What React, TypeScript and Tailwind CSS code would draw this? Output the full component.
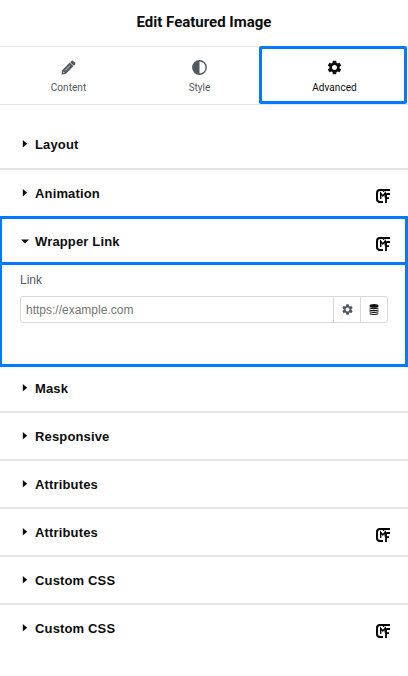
import React from "react";
import { MdSettings } from "react-icons/md";

function MfLogo() {
  return (
    <svg width="14" height="14" viewBox="0 0 14 14" fill="none" stroke="#000">
      <path d="M14 1H4Q1 1 1 4V10Q1 13 4 13H7" strokeWidth="2" />
      <path d="M4.7 10V4.2L6.8 6.9L9.2 4V8.5" strokeWidth="1.4" />
      <path d="M14 5H11Q10 5 10 6.5V14M10 9.2H13" strokeWidth="1.8" />
      <path d="M7.5 1.5V3" strokeWidth="1.4" />
    </svg>
  );
}

function PencilIcon() {
  return (
    <svg width="15" height="15" viewBox="0 0 15 15" fill="#515962">
      <path d="M10.4 .9Q11.4 0 12.4 .9L14 2.6Q14.9 3.6 14 4.6L12.8 5.8L9.2 2.2Z" />
      <path d="M8.8 2.6L12.4 6.2L4.6 13.9L.5 14.6L1.2 10.3Z" />
      <path d="M4.2 10.5L9 5.7" stroke="#fff" strokeWidth=".7" />
      <path d="M2 11.7L3.4 13.1" stroke="#fff" strokeWidth=".9" />
    </svg>
  );
}

function ContrastIcon() {
  return (
    <svg width="15" height="15" viewBox="0 0 15 15">
      <circle cx="7.5" cy="7.5" r="6.7" fill="none" stroke="#515962" strokeWidth="1.4" />
      <path d="M7.5 .8A6.7 6.7 0 0 0 7.5 14.2Z" fill="#515962" />
    </svg>
  );
}

function StackIcon() {
  return (
    <svg width="10" height="11" viewBox="0 0 10 11">
      <ellipse cx="5" cy="1.9" rx="4.5" ry="1.8" fill="#0c0d0e" />
      <path
        d="M.5 3.9Q5 5.4 9.5 3.9M.5 5.9Q5 7.4 9.5 5.9M.5 7.8Q5 9.3 9.5 7.8M.7 9.7Q5 11.2 9.3 9.7"
        fill="none"
        stroke="#0c0d0e"
        strokeWidth="1.05"
      />
    </svg>
  );
}

function Heading({ title, open = false, logo = false }: { title: string; open?: boolean; logo?: boolean }) {
  return (
    <div className="flex h-[46px] items-center pl-[21px] pr-[18px]">
      <svg
        className={open ? "mr-[6px] -mt-[2px] shrink-0" : "mr-[6px] shrink-0"}
        width="8"
        height="8"
        viewBox="0 0 8 8"
        fill="#0c0d0e"
      >
        {open ? <path d="M0 2.5H8L4 6.5Z" /> : <path d="M1.8 0L6.2 3.7L1.8 7.4Z" />}
      </svg>
      <span
        className={
          open
            ? "flex-1 text-[13px] leading-[18px] font-bold tracking-[0.15px] text-[#0c0d0e]"
            : "mt-[2px] flex-1 text-[13px] leading-[18px] font-bold tracking-[0.15px] text-[#0c0d0e]"
        }
      >
        {title}
      </span>
      {logo && (
        <span className={open ? "mt-[4px]" : "mt-[6px]"}>
          <MfLogo />
        </span>
      )}
    </div>
  );
}

const laterSections = [
  { title: "Responsive", logo: false },
  { title: "Attributes", logo: false },
  { title: "Attributes", logo: true },
  { title: "Custom CSS", logo: false },
  { title: "Custom CSS", logo: true },
];

export default function App() {
  return (
    <main className="h-[676px] w-[408px] overflow-hidden bg-white font-['Liberation_Sans',Arial,sans-serif]">
      <header className="flex h-[46px] items-center justify-center font-['Roboto',sans-serif] text-[15px] font-bold text-[#0c0d0e]">
        <h1 className="-mt-[2px]">Edit Featured Image</h1>
      </header>
      <nav className="flex h-[59px] border-y border-[#e6e8ea] font-['Roboto',sans-serif] text-[10px] leading-[14px] text-[#515962]">
        <div className="flex w-[137px] flex-col items-center pt-[13px]">
          <span className="mb-[6px]">
            <PencilIcon />
          </span>
          <span className="tracking-[0.05px]">Content</span>
        </div>
        <div className="flex w-[122px] flex-col items-center pt-[13px] pl-[3px]">
          <span className="mb-[6px]">
            <ContrastIcon />
          </span>
          <span>Style</span>
        </div>
        <div className="-mt-px flex h-[58px] w-[148px] flex-col items-center rounded-[2px] border-[3px] border-[#007bff] pt-[10px] pl-[3px] text-[#0c0d0e]">
          <MdSettings size={17} className="mb-[5px]" />
          <span className="tracking-[0.05px]">Advanced</span>
        </div>
      </nav>

      <section className="border-b-2 border-[#e6e6e6] pt-[16px] pb-px">
        <Heading title="Layout" />
      </section>
      <section>
        <Heading title="Animation" logo />
      </section>
      <section className="h-[151px] border-y-[3px] border-r-[3px] border-l-2 border-[#007bff]">
        <div className="-mr-[3px] -ml-[2px] h-[46px] border-b-[3px] border-[#007bff]">
          <Heading title="Wrapper Link" open logo />
        </div>
        <div className="pt-[6px] pr-[17px] pl-[18px]">
          <label className="block text-[12px] leading-[18px] text-[#515962]">Link</label>
          <div className="mt-[7px] flex h-[27px] rounded-[3px] border border-[#d5d8dc]">
            <input
              className="min-w-0 flex-1 pl-[5px] text-[12px] outline-none placeholder:text-[#757575]"
              placeholder="https://example.com"
            />
            <button className="flex w-[27px] items-center justify-center border-l border-[#d5d8dc] text-[#515962]">
              <MdSettings size={13} />
            </button>
            <button className="flex w-[27px] items-center justify-center border-l border-[#d5d8dc]">
              <StackIcon />
            </button>
          </div>
        </div>
      </section>
      <section className="-mt-[2px]">
        <Heading title="Mask" />
      </section>
      {laterSections.map((s, i) => (
        <section key={i} className="border-t-2 border-[#e6e6e6]">
          <Heading title={s.title} logo={s.logo} />
        </section>
      ))}
    </main>
  );
}
